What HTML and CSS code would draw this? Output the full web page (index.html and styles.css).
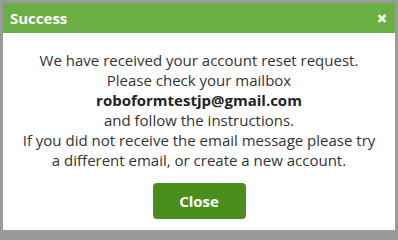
FILE: index.html
```html
<!DOCTYPE html>
<html>
<head>
<meta charset="utf-8">
<link rel="stylesheet" href="styles.css">
</head>
<body>
<div class="dialog">
  <div class="header">
    <span class="title">Success</span>
    <svg class="close-x" width="10" height="11" viewBox="0 0 10 11"><path d="M1.5 2 L8.5 9 M8.5 2 L1.5 9" stroke="#e6f2dd" stroke-width="3" stroke-linecap="butt"/></svg>
  </div>
  <div class="content">
    <p class="message">We have received your account reset request.<br>Please check your mailbox<br><b>roboformtestjp@gmail.com</b><br>and follow the instructions.<br>If you did not receive the email message please try<br>a different email, or create a new account.</p>
    <button class="btn">Close</button>
  </div>
</div>
</body>
</html>
```
FILE: styles.css
```css
html, body { margin: 0; padding: 0; }
html { height: 234px; overflow: hidden; background: #9a9a9a; }
body {
  background: #9a9a9a;
  width: 398px;
  height: 234px;
  padding: 3px 3px 4px 3px;
  box-sizing: border-box;
  overflow: hidden;
  font-family: "Open Sans", "DejaVu Sans", sans-serif;
}
.dialog {
  width: 392px;
  height: 227px;
  background: #fff;
  display: flex;
  flex-direction: column;
}
.header {
  height: 30px;
  flex: none;
  background: #6bae43;
  display: flex;
  align-items: center;
  justify-content: space-between;
  padding: 0 8px 0 7px;
}
.title {
  color: #fff;
  font-weight: 700;
  font-size: 15px;
}
.close-x { display: block; margin-top: 1px; }
.content {
  display: flex;
  flex-direction: column;
  align-items: center;
  padding-top: 17px;
}
.message {
  margin: 0;
  text-align: center;
  font-size: 15px;
  line-height: 20px;
  color: #333;
}
.message b { color: #222; }
.btn {
  margin-top: 13px;
  width: 93px;
  height: 36px;
  border: none;
  border-radius: 4px;
  background: #4a8f1e;
  color: #fff;
  font-family: inherit;
  font-weight: 700;
  font-size: 15px;
}
```
